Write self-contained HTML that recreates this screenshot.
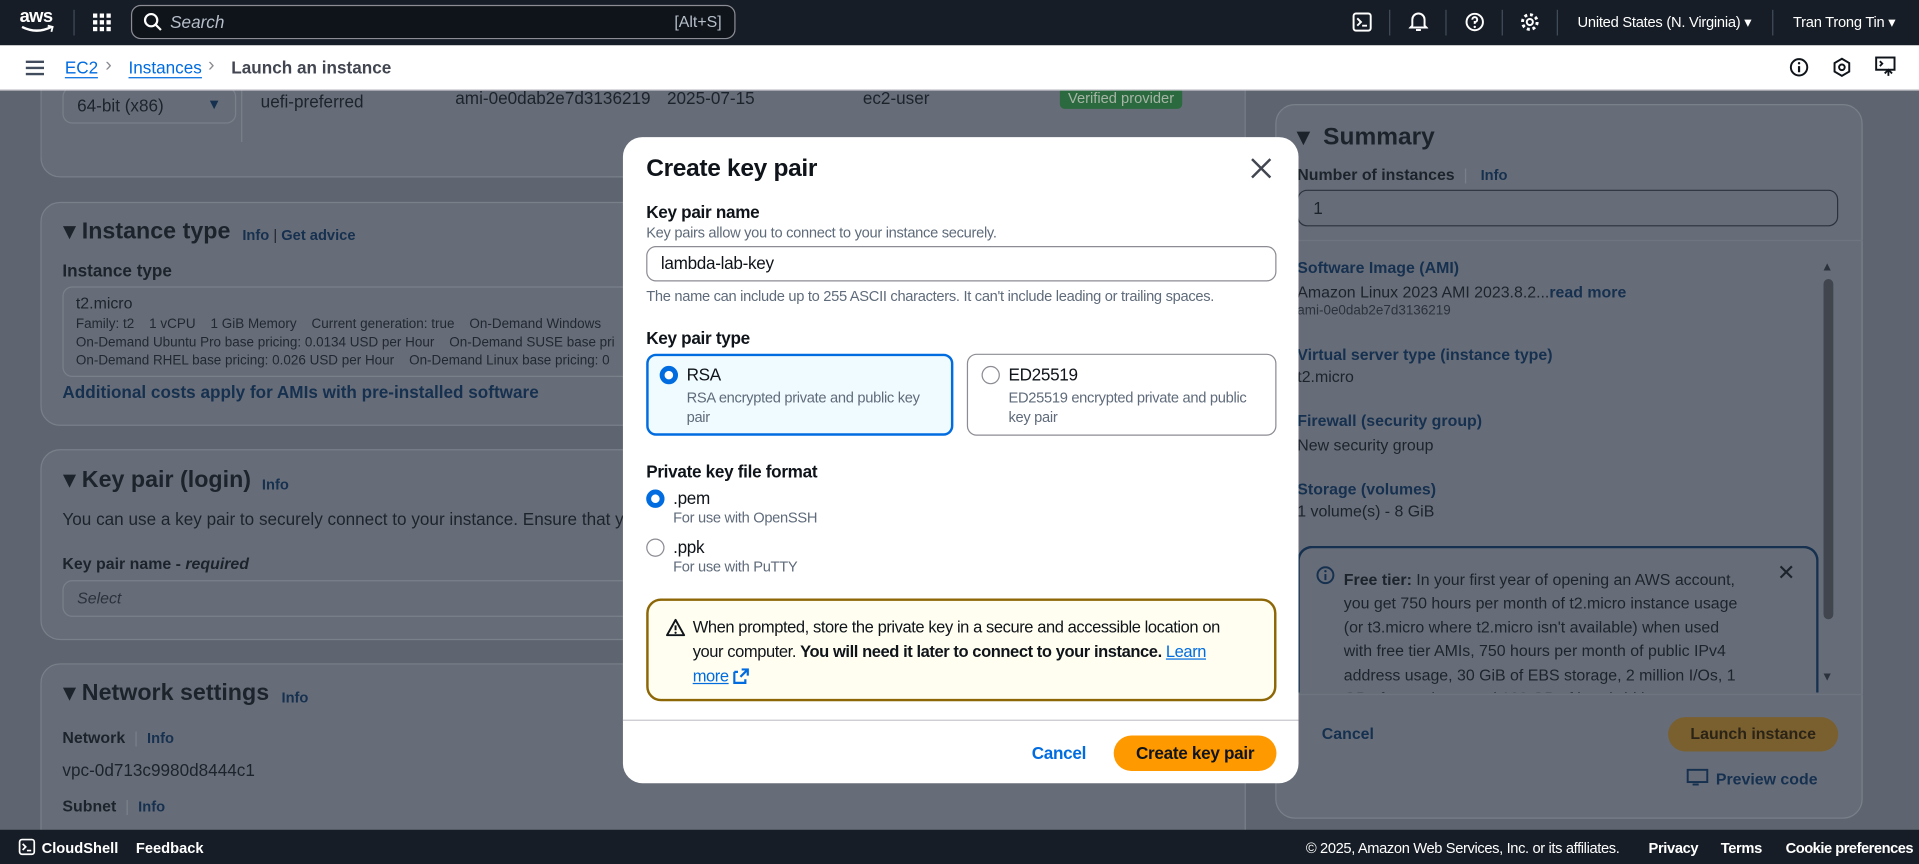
<!DOCTYPE html>
<html><head><meta charset="utf-8"><style>
*{box-sizing:border-box;margin:0;padding:0}
html,body{width:1919px;height:864px;overflow:hidden;background:#5f6570}
#w{position:absolute;left:0;top:0;width:1568px;height:706px;transform:scale(1.22385);transform-origin:0 0;font-family:"Liberation Sans",Arial,sans-serif;color:#0f141a}
.a{position:absolute;white-space:nowrap}
.top{position:absolute;left:0;top:0;width:1568px;height:37px;background:#161d26;color:#fff;z-index:5}
.crumb{position:absolute;left:0;top:37px;width:1568px;height:37px;background:#fff;border-bottom:1px solid #c6c6cd;z-index:5}
.card{position:absolute;background:#676d78;border:1px solid #7a808a;border-radius:16px}
.dim{color:#1d232b}
.dl{color:#16304f;font-weight:bold}
.foot{position:absolute;left:0;top:678px;width:1568px;height:28px;background:#161d26;color:#fff;font-size:12px;z-index:5}
.modal{position:absolute;left:509px;top:112px;width:552px;height:528px;background:#fff;border-radius:16px;z-index:6;letter-spacing:-0.25px}
.m{position:absolute;white-space:nowrap}
.lbl{font-size:14px;font-weight:bold;color:#0f141a}
.sub{font-size:12px;color:#5f6b7a}
.radio{position:absolute;width:15px;height:15px;border-radius:50%;border:1.5px solid #8c8c94;background:#fff}
.radio.on{border:4.5px solid #006ce0}
</style></head><body><div id="w">
<div class="top">
 <div class="a" style="left:16px;top:5px;font-size:15px;font-weight:bold;letter-spacing:-0.5px">aws</div>
 <svg class="a" style="left:16px;top:20px" width="30" height="8"><path d="M2 2 Q14 8 26 2" stroke="#fff" stroke-width="2" fill="none"/><path d="M23 1 L27 2 L26 6" stroke="#fff" stroke-width="1.5" fill="none"/></svg>
 <div class="a" style="left:60px;top:8px;width:1px;height:21px;background:#414d5c"></div>
 <svg class="a" style="left:76px;top:11px" width="15" height="15" fill="#fff"><rect x="0" y="0" width="3.5" height="3.5"/><rect x="5.5" y="0" width="3.5" height="3.5"/><rect x="11" y="0" width="3.5" height="3.5"/><rect x="0" y="5.5" width="3.5" height="3.5"/><rect x="5.5" y="5.5" width="3.5" height="3.5"/><rect x="11" y="5.5" width="3.5" height="3.5"/><rect x="0" y="11" width="3.5" height="3.5"/><rect x="5.5" y="11" width="3.5" height="3.5"/><rect x="11" y="11" width="3.5" height="3.5"/></svg>
 <div class="a" style="left:107px;top:4px;width:494px;height:28px;border:1.5px solid #8c8c94;border-radius:8px;background:#0f141a"></div>
 <svg class="a" style="left:117px;top:10px" width="16" height="16"><circle cx="6.5" cy="6.5" r="5" stroke="#fff" stroke-width="1.8" fill="none"/><path d="M10.5 10.5 L14.5 14.5" stroke="#fff" stroke-width="1.8"/></svg>
 <div class="a" style="left:139px;top:10px;font-size:14px;font-style:italic;color:#b6bec9">Search</div>
 <div class="a" style="left:551px;top:10px;font-size:13px;color:#b6bec9">[Alt+S]</div>
 <svg class="a" style="left:1105px;top:10px" width="16" height="16"><rect x="1" y="1" width="14" height="14" rx="2" stroke="#fff" stroke-width="1.6" fill="none"/><path d="M4 5 L7 8 L4 11 M8 11 H12" stroke="#fff" stroke-width="1.6" fill="none"/></svg>
 <div class="a" style="left:1135px;top:8px;width:1px;height:21px;background:#414d5c"></div>
 <svg class="a" style="left:1151px;top:9px" width="16" height="17"><path d="M3 12 V7 A5 5 0 0 1 13 7 V12 L14.5 13.5 H1.5 Z" stroke="#fff" stroke-width="1.6" fill="none"/><path d="M6 15.5 H10" stroke="#fff" stroke-width="1.6"/></svg>
 <div class="a" style="left:1181px;top:8px;width:1px;height:21px;background:#414d5c"></div>
 <svg class="a" style="left:1197px;top:10px" width="16" height="16"><circle cx="8" cy="8" r="6.7" stroke="#fff" stroke-width="1.6" fill="none"/><path d="M6 6 A2 2 0 1 1 8 8 V9.5" stroke="#fff" stroke-width="1.6" fill="none"/><circle cx="8" cy="12" r="1" fill="#fff"/></svg>
 <div class="a" style="left:1227px;top:8px;width:1px;height:21px;background:#414d5c"></div>
 <svg class="a" style="left:1242px;top:10px" width="16" height="16"><circle cx="8" cy="8" r="2.5" stroke="#fff" stroke-width="1.6" fill="none"/><circle cx="8" cy="8" r="6" stroke="#fff" stroke-width="2.4" fill="none" stroke-dasharray="2.4 2.3"/></svg>
 <div class="a" style="left:1272px;top:8px;width:1px;height:21px;background:#414d5c"></div>
 <div class="a" style="left:1289px;top:11px;font-size:12px;color:#fff;letter-spacing:-0.2px">United States (N. Virginia) ▾</div>
 <div class="a" style="left:1448px;top:8px;width:1px;height:21px;background:#414d5c"></div>
 <div class="a" style="left:1465px;top:11px;font-size:12px;color:#fff;letter-spacing:-0.2px">Tran Trong Tin ▾</div>
</div>
<div class="crumb">
 <svg class="a" style="left:21px;top:12px" width="15" height="13"><path d="M0 1.5 H15 M0 6.5 H15 M0 11.5 H15" stroke="#414d5c" stroke-width="2"/></svg>
 <div class="a" style="left:53px;top:10px;font-size:14px;color:#006ce0;border-bottom:1px solid #006ce0">EC2</div>
 <div class="a" style="left:86px;top:8px;font-size:16px;color:#8c8c94">›</div>
 <div class="a" style="left:105px;top:10px;font-size:14px;color:#006ce0;border-bottom:1px solid #006ce0">Instances</div>
 <div class="a" style="left:170px;top:8px;font-size:16px;color:#8c8c94">›</div>
 <div class="a" style="left:189px;top:10px;font-size:14px;color:#424650;font-weight:bold">Launch an instance</div>
 <svg class="a" style="left:1462px;top:10px" width="16" height="16"><circle cx="8" cy="8" r="6.7" stroke="#0f141a" stroke-width="1.6" fill="none"/><path d="M8 7 V12" stroke="#0f141a" stroke-width="1.8"/><circle cx="8" cy="4.7" r="1" fill="#0f141a"/></svg>
 <svg class="a" style="left:1497px;top:10px" width="16" height="16"><path d="M8 1 L14 4.5 V11.5 L8 15 L2 11.5 V4.5 Z" stroke="#0f141a" stroke-width="1.6" fill="none"/><circle cx="8" cy="8" r="2.3" stroke="#0f141a" stroke-width="1.6" fill="none"/></svg>
 <svg class="a" style="left:1532px;top:9px" width="17" height="17"><rect x="1" y="1" width="15" height="10" stroke="#0f141a" stroke-width="1.6" fill="none"/><path d="M4 4 L6 6 L4 8 M8 14 L11 11 L14 14 M11 11 V16" stroke="#0f141a" stroke-width="1.5" fill="none"/></svg>
</div>
<!-- left cards -->
<div class="card" style="left:33px;top:40px;width:985px;height:105px;border-top:none;border-radius:0 0 16px 16px"></div>
<div class="a" style="left:51px;top:71px;width:142px;height:30px;border:1px solid #7a808a;border-radius:8px"></div>
<div class="a dim" style="left:63px;top:78px;font-size:14px">64-bit (x86)</div>
<div class="a" style="left:169px;top:78px;font-size:12px;color:#16304f">▼</div>
<div class="a" style="left:197px;top:66px;width:1px;height:50px;background:#7a808a"></div>
<div class="a dim" style="left:213px;top:75px;font-size:14px">uefi-preferred</div>
<div class="a dim" style="left:372px;top:72px;font-size:14px">ami-0e0dab2e7d3136219</div>
<div class="a dim" style="left:545px;top:72px;font-size:14px">2025-07-15</div>
<div class="a dim" style="left:705px;top:72px;font-size:14px">ec2-user</div>
<div class="a" style="left:866px;top:71px;width:100px;height:18px;background:#2b6a3f;border-radius:4px;color:#a7b5a6;font-size:12px;text-align:center;line-height:18px">Verified provider</div>

<div class="card" style="left:33px;top:165px;width:985px;height:183px"></div>
<div class="a dim" style="left:52px;top:178px;font-size:19px;font-weight:bold">▾ Instance type</div>
<div class="a dl" style="left:198px;top:185px;font-size:12px">Info <span style="color:#1d232b;font-weight:normal">|</span> Get advice</div>
<div class="a dim" style="left:51px;top:213px;font-size:14px;font-weight:bold">Instance type</div>
<div class="a" style="left:51px;top:234px;width:980px;height:74px;border:1px solid #7a808a;border-radius:8px"></div>
<div class="a dim" style="left:62px;top:240px;font-size:13px">t2.micro</div>
<div class="a dim" style="left:62px;top:258px;font-size:11px;line-height:15px;color:#222831">Family: t2&nbsp;&nbsp;&nbsp;&nbsp;1 vCPU&nbsp;&nbsp;&nbsp;&nbsp;1 GiB Memory&nbsp;&nbsp;&nbsp;&nbsp;Current generation: true&nbsp;&nbsp;&nbsp;&nbsp;On-Demand Windows<br>On-Demand Ubuntu Pro base pricing: 0.0134 USD per Hour&nbsp;&nbsp;&nbsp;&nbsp;On-Demand SUSE base pri<br>On-Demand RHEL base pricing: 0.026 USD per Hour&nbsp;&nbsp;&nbsp;&nbsp;On-Demand Linux base pricing: 0</div>
<div class="a dl" style="left:51px;top:312px;font-size:14px">Additional costs apply for AMIs with pre-installed software</div>

<div class="card" style="left:33px;top:367px;width:985px;height:156px"></div>
<div class="a dim" style="left:52px;top:381px;font-size:19px;font-weight:bold">▾ Key pair (login)</div>
<div class="a dl" style="left:214px;top:389px;font-size:12px">Info</div>
<div class="a dim" style="left:51px;top:416px;font-size:14px">You can use a key pair to securely connect to your instance. Ensure that you hav</div>
<div class="a dim" style="left:51px;top:453px;font-size:13px;font-weight:bold">Key pair name - <i>required</i></div>
<div class="a" style="left:51px;top:474px;width:980px;height:30px;border:1px solid #7a808a;border-radius:8px"></div>
<div class="a" style="left:63px;top:481px;font-size:13px;font-style:italic;color:#2b323c">Select</div>

<div class="card" style="left:33px;top:542px;width:985px;height:160px"></div>
<div class="a dim" style="left:52px;top:555px;font-size:19px;font-weight:bold">▾ Network settings</div>
<div class="a dl" style="left:230px;top:563px;font-size:12px">Info</div>
<div class="a dim" style="left:51px;top:595px;font-size:13px;font-weight:bold">Network <span style="font-weight:normal;color:#7a808a">&nbsp;|&nbsp;</span> <span class="dl" style="font-size:12px">Info</span></div>
<div class="a dim" style="left:51px;top:621px;font-size:14px">vpc-0d713c9980d8444c1</div>
<div class="a dim" style="left:51px;top:651px;font-size:13px;font-weight:bold">Subnet <span style="font-weight:normal;color:#7a808a">&nbsp;|&nbsp;</span> <span class="dl" style="font-size:12px">Info</span></div>

<!-- summary -->
<div class="card" style="left:1042px;top:85px;width:480px;height:584px"></div>
<div class="a dim" style="left:1060px;top:99px;font-size:20px;font-weight:bold">▾ &nbsp;Summary</div>
<div class="a dim" style="left:1060px;top:135px;font-size:13px;font-weight:bold">Number of instances <span style="font-weight:normal;color:#7a808a">&nbsp;|&nbsp;</span> <span class="dl" style="font-size:12px">&nbsp;Info</span></div>
<div class="a" style="left:1060px;top:155px;width:442px;height:30px;border:1px solid #2b323c;border-radius:8px"></div>
<div class="a dim" style="left:1073px;top:162px;font-size:14px">1</div>
<div class="a" style="left:1042px;top:196px;width:480px;height:1px;background:#6f7580"></div>
<div class="a dl" style="left:1060px;top:211px;font-size:13px">Software Image (AMI)</div>
<div class="a dim" style="left:1060px;top:231px;font-size:13px">Amazon Linux 2023 AMI 2023.8.2...<span class="dl">read more</span></div>
<div class="a" style="left:1060px;top:248px;font-size:11px;color:#2b323c">ami-0e0dab2e7d3136219</div>
<div class="a dl" style="left:1060px;top:282px;font-size:13px">Virtual server type (instance type)</div>
<div class="a dim" style="left:1060px;top:300px;font-size:13px">t2.micro</div>
<div class="a dl" style="left:1060px;top:336px;font-size:13px">Firewall (security group)</div>
<div class="a dim" style="left:1060px;top:356px;font-size:13px">New security group</div>
<div class="a dl" style="left:1060px;top:392px;font-size:13px">Storage (volumes)</div>
<div class="a dim" style="left:1060px;top:410px;font-size:13px">1 volume(s) - 8 GiB</div>
<div class="a" style="left:1060px;top:446px;width:426px;height:120px;border:2px solid #16304f;border-bottom:none;border-radius:12px 12px 0 0;overflow:hidden">
 <svg class="a" style="left:13px;top:14px" width="16" height="16"><circle cx="8" cy="8" r="6.5" stroke="#16304f" stroke-width="1.6" fill="none"/><path d="M8 7 V12" stroke="#16304f" stroke-width="1.6"/><circle cx="8" cy="4.7" r="1" fill="#16304f"/></svg>
 <div class="a dim" style="left:36px;top:16px;font-size:13px;line-height:19.4px;white-space:normal;width:328px"><b>Free tier:</b> In your first year of opening an AWS account, you get 750 hours per month of t2.micro instance usage (or t3.micro where t2.micro isn't available) when used with free tier AMIs, 750 hours per month of public IPv4 address usage, 30 GiB of EBS storage, 2 million I/Os, 1 GB of snapshots, and 100 GB of bandwidth to</div>
 <div class="a dim" style="left:390px;top:10px;font-size:18px">✕</div>
</div>
<div class="a" style="left:1490px;top:228px;width:8px;height:278px;background:#40454e;border-radius:4px"></div>
<div class="a" style="left:1488px;top:213px;font-size:10px;color:#2b323c">▲</div>
<div class="a" style="left:1488px;top:548px;font-size:10px;color:#2b323c">▼</div>
<div class="a" style="left:1042px;top:567px;width:480px;height:1px;background:#6f7580"></div>
<div class="a dl" style="left:1080px;top:592px;font-size:13px">Cancel</div>
<div class="a" style="left:1363px;top:586px;width:139px;height:28px;background:#7a5f2f;border-radius:14px;color:#2b2416;font-weight:bold;font-size:13px;text-align:center;line-height:28px">Launch instance</div>
<svg class="a" style="left:1378px;top:628px" width="18" height="16"><rect x="1" y="1" width="16" height="10" stroke="#16304f" stroke-width="1.6" fill="none"/><path d="M5 13 H10" stroke="#16304f" stroke-width="1.6"/></svg>
<div class="a dl" style="left:1402px;top:629px;font-size:13px">Preview code</div>

<div class="foot">
 <svg class="a" style="left:15px;top:7px" width="14" height="14"><rect x="1" y="1" width="12" height="12" rx="2" stroke="#fff" stroke-width="1.4" fill="none"/><path d="M3.5 4.5 L6 7 L3.5 9.5 M7 10 H10.5" stroke="#fff" stroke-width="1.4" fill="none"/></svg>
 <div class="a" style="left:34px;top:8px;font-weight:bold">CloudShell</div>
 <div class="a" style="left:111px;top:8px;font-weight:bold">Feedback</div>
 <div class="a" style="left:1067px;top:8px;letter-spacing:-0.3px">© 2025, Amazon Web Services, Inc. or its affiliates.</div>
 <div class="a" style="left:1347px;top:8px;font-weight:bold;letter-spacing:-0.3px">Privacy</div>
 <div class="a" style="left:1406px;top:8px;font-weight:bold;letter-spacing:-0.3px">Terms</div>
 <div class="a" style="left:1459px;top:8px;font-weight:bold;letter-spacing:-0.4px">Cookie preferences</div>
</div>

<div class="modal">
 <div class="m" style="left:19px;top:15px;font-size:20px;font-weight:bold">Create key pair</div>
 <svg class="m" style="left:513px;top:17px" width="17" height="17"><path d="M1 1 L16 16 M16 1 L1 16" stroke="#424650" stroke-width="2"/></svg>
 <div class="m lbl" style="left:19px;top:53px">Key pair name</div>
 <div class="m sub" style="left:19px;top:71px">Key pairs allow you to connect to your instance securely.</div>
 <div class="m" style="left:19px;top:89px;width:515px;height:29px;border:1px solid #8c8c94;border-radius:8px"></div>
 <div class="m" style="left:31px;top:95px;font-size:14px">lambda-lab-key</div>
 <div class="m sub" style="left:19px;top:123px">The name can include up to 255 ASCII characters. It can't include leading or trailing spaces.</div>
 <div class="m lbl" style="left:19px;top:156px">Key pair type</div>
 <div class="m" style="left:19px;top:177px;width:251px;height:67px;border:2px solid #006ce0;border-radius:8px;background:#f0fbff"></div>
 <div class="radio on" style="left:30px;top:187px"></div>
 <div class="m" style="left:52px;top:186px;font-size:14px">RSA</div>
 <div class="m sub" style="left:52px;top:205px;line-height:16px;white-space:normal;width:210px">RSA encrypted private and public key pair</div>
 <div class="m" style="left:281px;top:177px;width:253px;height:67px;border:1px solid #8c8c94;border-radius:8px"></div>
 <div class="radio" style="left:293px;top:187px"></div>
 <div class="m" style="left:315px;top:186px;font-size:14px">ED25519</div>
 <div class="m sub" style="left:315px;top:205px;line-height:16px;white-space:normal;width:200px">ED25519 encrypted private and public key pair</div>
 <div class="m lbl" style="left:19px;top:265px">Private key file format</div>
 <div class="radio on" style="left:19px;top:288px"></div>
 <div class="m" style="left:41px;top:287px;font-size:14px">.pem</div>
 <div class="m sub" style="left:41px;top:304px">For use with OpenSSH</div>
 <div class="radio" style="left:19px;top:328px"></div>
 <div class="m" style="left:41px;top:327px;font-size:14px">.ppk</div>
 <div class="m sub" style="left:41px;top:344px">For use with PuTTY</div>
 <div class="m" style="left:19px;top:377px;width:515px;height:84px;border:2px solid #8d6605;border-radius:12px;background:#fffef0"></div>
 <svg class="m" style="left:35px;top:393px" width="16" height="15"><path d="M8 1.5 L15 14 H1 Z" stroke="#0f141a" stroke-width="1.6" fill="none" stroke-linejoin="round"/><path d="M8 6 V10" stroke="#0f141a" stroke-width="1.6"/><circle cx="8" cy="12" r="0.9" fill="#0f141a"/></svg>
 <div class="m" style="left:57px;top:391px;font-size:13.5px;line-height:20px;white-space:normal;width:452px;letter-spacing:-0.35px">When prompted, store the private key in a secure and accessible location on your computer. <b>You will need it later to connect to your instance.</b> <span style="color:#006ce0;text-decoration:underline">Learn more</span> <svg width="13" height="13" style="vertical-align:-2px"><path d="M1 3 V12 H10 V9 M1 3 H4 M7 1 H12 V6 M12 1 L6 7" stroke="#006ce0" stroke-width="1.8" fill="none"/></svg></div>
 <div class="m" style="left:0;top:476px;width:552px;height:1px;background:#c6c6cd"></div>
 <div class="m" style="left:334px;top:495px;font-size:14px;font-weight:bold;color:#006ce0">Cancel</div>
 <div class="m" style="left:401px;top:489px;width:133px;height:29px;background:#ff9900;border-radius:15px;font-size:14px;font-weight:bold;text-align:center;line-height:29px">Create key pair</div>
</div>
</div></body></html>
